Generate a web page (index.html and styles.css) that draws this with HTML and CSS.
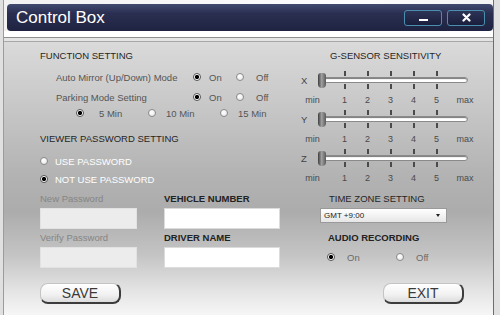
FILE: index.html
```html
<!DOCTYPE html>
<html lang="en">
<head>
  <meta charset="UTF-8" />
  <meta name="viewport" content="width=device-width, initial-scale=1.0" />
  <title>Control Box</title>
  <link rel="stylesheet" href="styles.css">
</head>
<body>
  <div class="window">
    <header class="titlebar">
      <h1>Control Box</h1>
      <div class="win-btns">
        <button class="win-btn" type="button"><span class="min-glyph"></span></button>
        <button class="win-btn" type="button">
          <svg width="9" height="9" viewBox="0 0 9 9"><path d="M1.5 1.5 L7.5 7.5 M7.5 1.5 L1.5 7.5" stroke="#fff" stroke-width="2.2" stroke-linecap="round"/></svg>
        </button>
      </div>
    </header>
    <div class="strip"></div>
    <div class="rule"></div>

    <main class="panel">
      <!-- coluna da esquerda -->
      <section class="left">
        <h2 class="heading">FUNCTION SETTING</h2>
        <div class="opt-row first">
          <span class="opt-label">Auto Mirror (Up/Down) Mode</span>
          <label class="radio on"><i></i>On</label>
          <label class="radio wide"><i></i>Off</label>
        </div>
        <div class="opt-row">
          <span class="opt-label">Parking Mode Setting</span>
          <label class="radio on"><i></i>On</label>
          <label class="radio wide"><i></i>Off</label>
        </div>
        <div class="min-row">
          <label class="radio on"><i></i><span class="pad">5 Min</span></label>
          <label class="radio"><i></i>10 Min</label>
          <label class="radio"><i></i>15 Min</label>
        </div>

        <h2 class="heading viewer">VIEWER PASSWORD SETTING</h2>
        <label class="radio pw first"><i></i>USE PASSWORD</label>
        <label class="radio pw on"><i></i>NOT USE PASSWORD</label>

        <div class="fields">
          <span class="field-label muted">New Password</span>
          <span class="field-label">VEHICLE NUMBER</span>
          <input class="field disabled" type="password" disabled>
          <input class="field" type="text">
          <span class="field-label muted">Verify Password</span>
          <span class="field-label">DRIVER NAME</span>
          <input class="field disabled" type="password" disabled>
          <input class="field" type="text">
        </div>

        <button class="btn save" type="button">SAVE</button>
      </section>

      <!-- coluna da direita -->
      <section class="right">
        <h2 class="heading sensor">G-SENSOR SENSITIVITY</h2>

        <div class="axis">
          <div class="ticks"><i></i><i></i><i></i><i></i><i></i></div>
          <div class="track-row"><span class="axis-name">X</span><div class="track"><span class="thumb"></span></div></div>
          <div class="ticks"><i></i><i></i><i></i><i></i><i></i></div>
          <div class="scale"><span>min</span><span>1</span><span>2</span><span>3</span><span>4</span><span>5</span><span>max</span></div>
        </div>
        <div class="axis">
          <div class="ticks"><i></i><i></i><i></i><i></i><i></i></div>
          <div class="track-row"><span class="axis-name">Y</span><div class="track"><span class="thumb"></span></div></div>
          <div class="ticks"><i></i><i></i><i></i><i></i><i></i></div>
          <div class="scale"><span>min</span><span>1</span><span>2</span><span>3</span><span>4</span><span>5</span><span>max</span></div>
        </div>
        <div class="axis">
          <div class="ticks"><i></i><i></i><i></i><i></i><i></i></div>
          <div class="track-row"><span class="axis-name">Z</span><div class="track"><span class="thumb"></span></div></div>
          <div class="ticks"><i></i><i></i><i></i><i></i><i></i></div>
          <div class="scale"><span>min</span><span>1</span><span>2</span><span>3</span><span>4</span><span>5</span><span>max</span></div>
        </div>

        <h2 class="heading tz">TIME ZONE SETTING</h2>
        <div class="select">
          <span>GMT +9:00</span>
          <span class="caret"></span>
        </div>

        <h2 class="heading audio">AUDIO RECORDING</h2>
        <div class="audio-row">
          <label class="radio on"><i></i>On</label>
          <label class="radio"><i></i>Off</label>
        </div>

        <button class="btn exit" type="button">EXIT</button>
      </section>
    </main>
  </div>
</body>
</html>
```

FILE: styles.css
```css
* {
  box-sizing: border-box;
  margin: 0;
  padding: 0;
}

body {
  width: 500px;
  height: 315px;
  overflow: hidden;
  background-color: #e0e0e0;
  font-family: "Liberation Sans", Arial, sans-serif;
  color: #333;
}

.window {
  margin-left: 3px;
  width: 491px;
  height: 315px;
  padding-top: 4px;
  border-left: 1px solid #9c9c9c;
  border-right: 1px solid #6e6e6e;
  background: linear-gradient(to right, #f2f2f2, #fdfdfd 70%, #f4f4f4);
  display: flex;
  flex-direction: column;
}

/* barra de titulo */
.titlebar {
  margin-left: 3px;
  height: 27px;
  border-radius: 4px;
  background: linear-gradient(#414a70, #2a2f51 35%, #1f2341);
  display: flex;
  align-items: center;
  justify-content: space-between;
  padding: 0 8px 0 9px;
}

.titlebar h1 {
  font-size: 17px;
  font-weight: normal;
  color: #fff;
  line-height: 1;
}

.win-btns {
  display: flex;
  gap: 5px;
}

.win-btn {
  width: 38px;
  height: 16px;
  border: 1px solid #4a8fb0;
  border-radius: 3px;
  background: linear-gradient(#2d3456, #1b1f3d);
  display: flex;
  align-items: center;
  justify-content: center;
}

.min-glyph {
  display: block;
  width: 9px;
  height: 2px;
  margin-top: 5px;
  background: #fff;
}

.strip {
  height: 7px;
  background: #fff;
  border-bottom: 1px solid #8e8e8e;
}

.rule {
  height: 4px;
  background: #e4e4e4;
  border-bottom: 1px solid #a8a8a8;
}

/* painel principal */
.panel {
  flex: 1;
  display: grid;
  grid-template-columns: 288px 1fr;
  background: linear-gradient(#dadada, #c6c6c6 25%, #b2b2b2 50%, #acacac 62%, #c4c4c4 78%, #e6e6e6 92%, #f6f6f6);
}

.heading {
  font-size: 9.5px;
  font-weight: normal;
  color: #262626;
  height: 14px;
  line-height: 14px;
}

.left {
  padding: 7px 0 0 36px;
  display: flex;
  flex-direction: column;
  align-items: flex-start;
}

.right {
  padding-top: 7px;
  display: flex;
  flex-direction: column;
  align-items: flex-start;
}

.radio {
  display: inline-flex;
  align-items: center;
  gap: 8px;
  font-size: 9.5px;
  color: #555;
}

.radio i {
  width: 8px;
  height: 8px;
  border-radius: 50%;
  border: 1px solid #8a8a8a;
  background: radial-gradient(circle at 40% 35%, #fff, #e4e4e4);
  flex-shrink: 0;
}

.radio.on i {
  border-color: #555;
  background: radial-gradient(circle, #000 0 1.8px, #fff 2.4px);
}

.radio.wide {
  gap: 12px;
}

.opt-row {
  margin-left: 16px;
  height: 18px;
  margin-top: 2px;
  display: grid;
  grid-template-columns: 137px 43px auto;
  align-items: center;
}

.opt-row.first {
  margin-top: 5px;
}

.opt-label {
  font-size: 9.5px;
  color: #555;
}

.min-row {
  margin-left: 36px;
  height: 14px;
  display: grid;
  grid-template-columns: 72px 72px auto;
  align-items: center;
}

.min-row .radio {
  gap: 10px;
}

.pad {
  padding-left: 5px;
}

.heading.viewer {
  margin-top: 12px;
}

.radio.pw {
  height: 18px;
  gap: 7px;
  color: #fff;
}

.radio.pw.first {
  margin-top: 6px;
}

.fields {
  margin-top: 4px;
  display: grid;
  grid-template-columns: 97px 116px;
  column-gap: 27px;
}

.field-label {
  height: 14px;
  line-height: 14px;
  font-size: 9.5px;
  font-weight: bold;
  color: #222;
  margin-top: 2px;
}

.field-label.muted {
  font-weight: normal;
  color: #858585;
}

.fields .field-label:nth-child(1),
.fields .field-label:nth-child(2) {
  margin-top: 0;
}

.field {
  height: 21px;
  margin-top: 2px;
  border: 1px solid #dcdcdc;
  background: #fff;
}

.field.disabled {
  background: #ececec;
  border-color: #e2e2e2;
}

.btn {
  width: 81px;
  height: 21px;
  font-family: "Liberation Sans", Arial, sans-serif;
  font-size: 14px;
  color: #3a3a3a;
  border: 1px solid #c4c4c4;
  border-right: 2px solid #3c3c3c;
  border-bottom: 2px solid #3c3c3c;
  border-radius: 8px;
  background: linear-gradient(#ffffff, #f1f1f1 60%, #dcdcdc);
}

.btn.save {
  margin-top: 15px;
}

/* sensor */
.heading.sensor {
  margin-left: 38px;
}

.axis {
  width: 190px;
}

.axis:first-of-type {
  margin-top: 8px;
}

.ticks {
  height: 5px;
  display: grid;
  grid-template-columns: 41px repeat(5, 23px) 34px;
}

.ticks i {
  width: 2px;
  justify-self: center;
  background: #4a4a4a;
}

.ticks i:first-child {
  grid-column: 2;
}

.track-row {
  height: 8px;
  display: flex;
  align-items: center;
}

.axis-name {
  width: 28px;
  padding-left: 9px;
  font-size: 9.5px;
  color: #444;
}

.track {
  width: 148px;
  height: 6px;
  border: 1px solid #8a8a8a;
  border-radius: 3px;
  background: #fff;
  box-shadow: inset 0 1px 1px #777;
  display: flex;
  align-items: center;
}

.thumb {
  flex-shrink: 0;
  width: 8px;
  height: 15px;
  margin-left: -3px;
  border-radius: 3px 3px 4px 4px;
  background: linear-gradient(to right, #3c3c3c, #a0a0a0 45%, #5a5a5a);
}

.scale {
  height: 21px;
  display: grid;
  grid-template-columns: 41px repeat(5, 23px) 34px;
  align-items: center;
  font-size: 9px;
  color: #4a4a4a;
  text-align: center;
}

.heading.tz {
  margin: 4px 0 0 37px;
}

.select {
  margin: 2px 0 0 28px;
  width: 127px;
  height: 15px;
  border: 1px solid #9a9a9a;
  background: linear-gradient(#ffffff, #e6e6e6);
  display: flex;
  align-items: center;
  justify-content: space-between;
  padding: 0 6px 0 3px;
  font-size: 8px;
  color: #222;
}

.caret {
  width: 0;
  height: 0;
  border-left: 2.5px solid transparent;
  border-right: 2.5px solid transparent;
  border-top: 3px solid #222;
}

.heading.audio {
  margin: 8px 0 0 36px;
  font-weight: bold;
  color: #222;
}

.audio-row {
  margin: 4px 0 0 35px;
  height: 16px;
  display: grid;
  grid-template-columns: 69px auto;
  align-items: center;
}

.audio-row .radio {
  gap: 12px;
  color: #6a6a6a;
}

.btn.exit {
  margin: 18px 0 0 91px;
}
```
